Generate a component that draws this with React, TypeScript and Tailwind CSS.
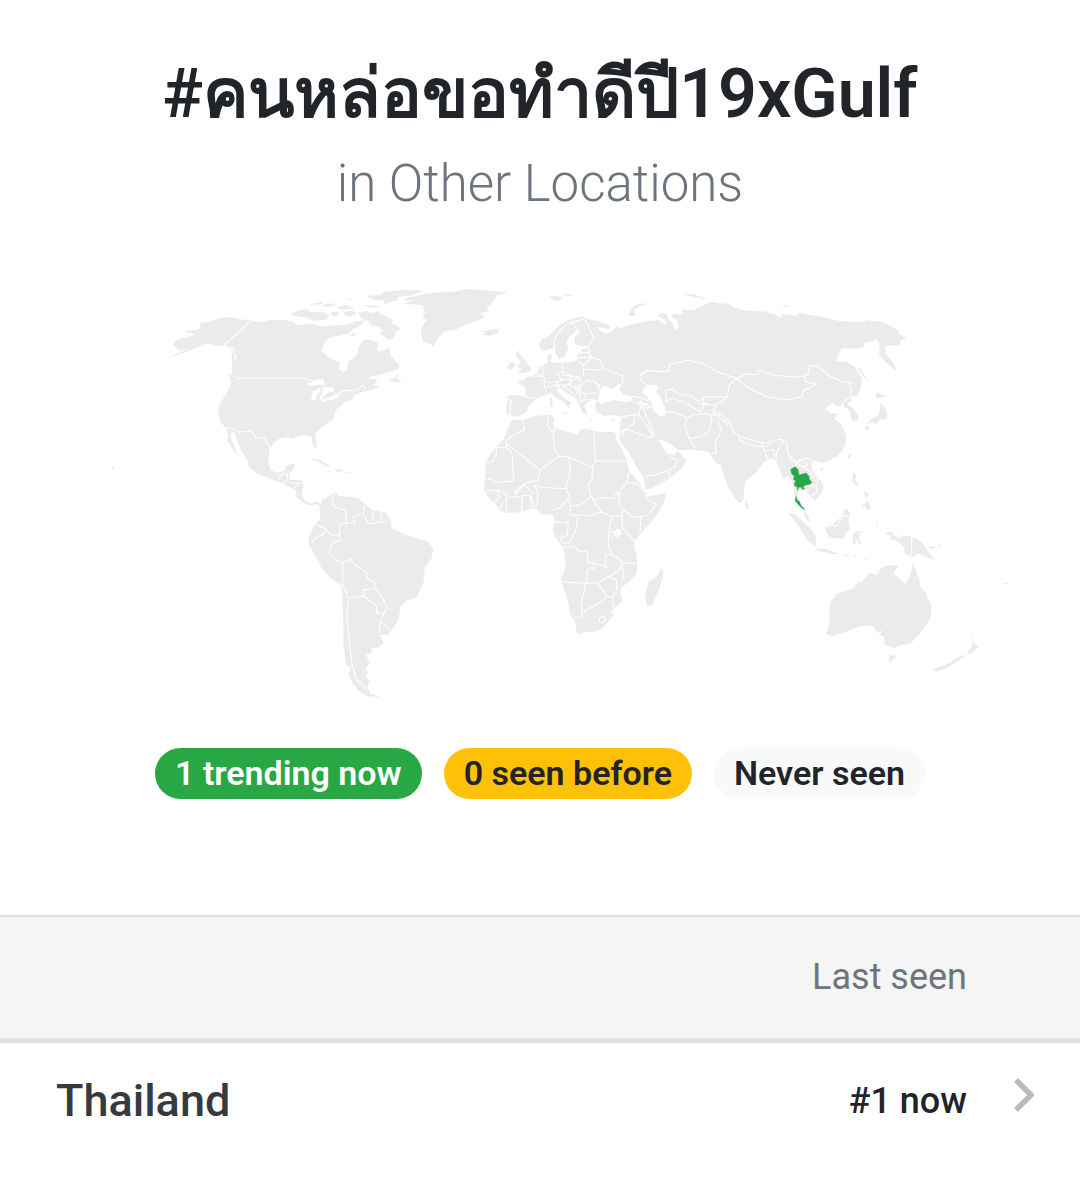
type Region = { origin: string; land: string; water?: string; borders: string };

// Each region is drawn on its own grid, three units to one map unit.
const regions: Region[] = [
  {
    // North America
    origin: "translate(150 270) scale(0.33333)",
    land:
      "M68 225L78 212L95 205L118 202L135 192L105 187L112 181L138 181L150 175L148 160L175 155L205 145L235 141L270 148L305 152L325 157L360 150L400 150L430 155L440 165L490 162L520 170L560 165L590 166L612 155L645 150L630 168L608 178L598 192L575 196L545 200L525 215L513 240L530 258L550 270L570 275L566 295L580 308L592 298L594 275L612 265L625 250L625 232L640 210L665 210L685 220L680 235L688 245L705 240L718 230L722 258L748 285L745 298L720 305L690 314L665 318L645 330L672 325L683 335L668 345L692 350L665 360L640 365L615 375L605 390L585 395L572 408L560 418L555 425L553 445L530 462L505 480L495 492L500 520L497 541L488 525L485 500L465 495L440 500L428 506L405 502L385 508L368 522L358 540L355 575L362 600L380 608L405 602L412 585L437 580L430 598L418 612L422 630L452 630L460 640L458 660L455 678L465 692L455 692L432 658L398 640L370 630L320 610L295 590L295 575L275 545L262 515L255 488L245 485L242 500L250 520L258 545L266 560L252 545L240 523L232 515L235 500L228 475L210 455L205 425L207 405L230 370L243 340L240 325L246 308L245 240L222 228L190 224L165 220L130 235L90 242Z" +
      "M420 135L445 120L480 117L475 125L520 127L538 135L528 150L490 152L468 142L450 140Z" +
      "M622 128L650 122L662 130L680 124L700 135L730 150L726 160L740 165L754 178L735 185L738 192L722 210L710 206L700 196L688 190L700 184L688 172L665 165L652 150L636 148Z" +
      "M650 78L690 75L700 66L760 60L810 60L790 70L745 82L740 92L700 102L705 92L665 88ZM760 100L810 88L810 101Z" +
      "M480 102L520 95L515 102L480 105ZM515 105L550 100L560 107L530 111ZM560 112L590 104L612 115L580 121ZM640 106L700 109L660 114ZM585 88L612 86L600 91ZM540 128L560 124L570 132L552 140ZM580 125L605 122L622 128L600 140L585 135Z" +
      "M718 332L738 320L745 308L742 322L755 338L735 336ZM40 269L100 244L165 222L110 246ZM231 310L248 322L240 324ZM596 195L612 190L622 194L605 198Z" +
      "M480 567L497 566L515 572L540 588L528 590L505 575ZM555 598L570 597L582 604L560 606ZM590 606L605 606L604 608L590 608ZM532 604L545 604L540 607Z",
    water:
      "M470 342L500 328L520 328L526 345L500 344L490 348ZM483 390L488 365L512 352L510 366L500 375L495 392ZM515 352L550 352L552 366L540 366L520 378L516 390L545 380L580 370L560 384L520 396L508 384L520 366Z",
    borders:
      "M305 152L222 225L238 234L250 232L252 250L260 262L252 270M250 316L262 325L460 325L490 333M545 380L580 362L620 361L638 345L648 358M228 475L245 474L268 487L305 482L318 505L345 502L352 520L362 538M385 628L395 614L412 612M412 612L414 628L398 640M416 634L425 640L458 640M430 655L445 645",
  },
  {
    // Greenland and Europe
    origin: "translate(400 270) scale(0.33333)",
    land:
      "M15 85L60 75L100 68L160 65L200 57L270 62L325 68L290 75L280 95L260 115L270 122L240 130L255 142L215 158L180 172L165 180L145 182L130 187L115 205L100 228L85 220L68 215L62 190L65 170L82 150L68 145L75 125L66 105L10 101L50 92L10 90ZM0 60L75 62L30 78L0 79Z" +
      "M320 378L340 375L378 380L376 355L352 334L375 328L378 320L395 320L410 308L420 290L438 280L445 278L440 260L454 250L456 262L452 275L470 280L485 278L520 275L533 268L530 255L545 250L542 238L568 235L560 228L530 226L522 215L525 200L540 185L535 178L525 185L508 200L500 215L505 238L492 262L478 268L466 250L462 232L445 240L425 242L418 225L422 210L450 195L480 165L510 148L545 140L570 148L600 155L632 168L628 178L590 170L605 185L620 192L640 180L652 168L660 175L690 165L720 158L760 152L780 150L780 510L760 505L700 478L675 490L660 487L665 440L640 435L610 438L588 425L585 405L592 395L582 388L560 398L552 408L562 434L548 428L535 400L528 385L510 375L490 362L478 352L470 362L490 382L515 400L508 402L508 418L495 400L465 380L455 368L440 372L430 378L412 385L388 405L380 425L365 435L345 440L320 432L318 410L325 390Z" +
      "M350 246L360 242L358 252L370 262L385 285L395 295L390 305L375 308L352 312L366 297L354 290L362 275L350 262ZM325 283L340 275L345 288L335 298L322 297ZM240 178L255 184L275 178L292 177L298 187L270 197L250 194L256 188ZM445 80L470 78L488 84L470 95ZM488 76L520 75L505 79Z" +
      "M685 134L695 112L715 103L755 99L720 108L702 120L705 138L692 138ZM450 384L456 384L458 410L450 412ZM485 428L503 427L498 434ZM565 446L585 447L575 450ZM632 450L648 444L640 454Z",
    water:
      "M598 372L600 358L612 348L625 352L635 358L645 350L655 345L666 346L656 358L670 372L692 380L698 392L680 397L640 390L605 402L592 394ZM732 360L742 348L768 344L775 354L766 365L780 378L790 405L800 430L785 440L770 430L762 410L748 388Z",
    borders:
      "M465 245L462 210L475 190L490 170L505 158L522 160L530 182M512 158L540 150L552 148L560 158M556 148L570 180L582 205L565 228M568 235L568 250L575 262L600 270L608 292L625 300L668 318L668 340L650 345M545 246L568 250M532 264L555 262L575 262M530 272L550 285L550 300L552 320M550 285L560 278L575 262M552 298L608 300M485 278L488 305L515 318L545 322M488 305L472 312L485 330L470 337L440 337M410 306L437 325L432 340L438 365M405 318L430 318L428 290M375 380L408 385M325 388L334 392L328 435M470 337L478 345L505 345L515 335M510 335L530 325L545 332L536 348L515 352ZM540 350L560 332L585 335L598 352L592 368L555 372L540 362ZM440 352L470 345L480 352M490 350L505 358L525 378M525 352L535 375M530 350L542 372L540 395M535 398L555 390L585 388M552 372L558 390M485 315L515 318L510 328L482 328M585 335L600 348M665 440L715 433L722 410L712 398M690 378L715 382L745 392M704 396L750 402M722 410L735 422M720 400L740 415L768 405M705 435L702 460L668 482M715 433L740 465L760 502M780 305L742 300L720 318L725 335L742 346",
  },
  {
    // Northern and central Asia
    origin: "translate(640 270) scale(0.33333)",
    land:
      "M0 160L30 152L55 155L82 165L75 150L55 138L60 128L78 130L85 145L100 165L105 180L118 170L110 150L92 138L98 133L130 132L125 120L160 120L185 108L215 95L235 100L270 102L278 112L320 122L380 125L425 142L425 132L470 138L475 128L545 140L580 150L620 155L675 155L675 150L725 155L760 172L780 185L775 192L800 205L780 212L780 224L735 228L738 252L765 285L768 302L740 280L718 255L718 220L708 207L700 214L672 218L674 230L655 236L605 235L588 272L620 275L645 290L665 325L663 355L650 378L632 378L634 392L622 402L640 415L655 435L655 450L640 455L632 440L625 418L612 412L610 400L598 410L582 405L580 398L560 412L555 418L575 430L595 430L582 445L605 465L620 500L612 535L590 560L550 578L520 572L512 590L530 615L548 640L548 660L470 660L465 635L445 615L430 628L422 600L405 572L395 565L372 575L350 605L315 635L312 670L310 690L300 700L288 690L265 650L250 615L243 585L228 580L205 545L165 540L115 540L95 525L60 508L35 490L0 470Z" +
      "M648 288L665 300L690 345L670 318ZM705 360L720 372L738 378L715 385L705 380L712 372ZM722 398L732 410L740 425L742 447L718 450L708 465L698 456L678 464L698 445L712 438L720 420ZM672 472L688 468L684 485ZM630 548L634 555L628 568L624 560ZM540 596L552 592L545 606Z" +
      "M130 72L155 72L205 86L160 81ZM415 104L455 108L440 110Z",
    water:
      "M8 356L22 346L48 344L55 354L46 365L60 378L62 392L75 410L76 436L58 438L40 425L38 405L25 385L10 368Z",
    borders:
      "M0 318L20 302L85 305L90 282L130 275L140 270L190 280L230 305L290 325L320 312L355 315L355 300L400 315L460 322L495 318L495 335L530 343L490 362L485 380L445 390L380 380L340 360L320 350L290 325M495 318L508 308L505 288L530 288L570 318L605 335L635 338L628 350L635 362L628 378M605 400L620 388L640 378M290 325L268 345L262 380L230 405L218 430L240 430L268 455L280 485L300 500L370 520L420 508L440 520L445 555L470 575L500 565L520 572M80 392L75 362L95 358L120 372L155 378L175 395L195 380L262 380M75 395L95 385L130 395L170 420L185 425M75 425L110 428L140 445L165 432L200 432L215 435L240 436M175 400L210 405L230 405M190 385L190 412L175 425M180 402L198 398M140 445L135 470L148 505L185 500L210 480L215 435M230 440L258 455L262 465M235 455L245 480L225 520L230 550L210 550M148 505L165 535M300 500L295 510L330 525L365 530L370 515M365 525L385 570M370 542L400 540L405 560M395 520L375 530M430 515L410 545L408 575M470 580L490 590L505 585M0 390L20 440L45 500M0 395L28 410",
  },
  {
    // Africa and Arabia
    origin: "translate(470 400) scale(0.33333)",
    land:
      "M128 60L160 60L200 48L245 43L254 60L248 72L255 84L275 90L300 98L322 106L330 90L350 85L372 93L400 97L430 95L440 103L437 118L455 145L470 182L478 215L495 232L515 258L528 275L530 288L560 286L588 277L585 300L570 330L548 360L515 398L495 420L493 440L500 465L502 492L500 518L478 545L455 562L452 580L458 605L435 622L430 645L400 682L380 694L345 697L325 704L318 692L318 672L300 640L293 600L275 550L275 530L288 500L285 470L280 445L270 430L252 408L248 385L255 362L248 345L235 343L215 343L200 328L185 327L150 336L110 340L90 330L72 310L52 288L42 268L45 240L48 215L45 190L60 165L75 145L95 125L105 108L112 85Z" +
      "M575 503L580 525L570 560L545 618L530 615L525 590L535 545L560 530Z" +
      "M455 50L520 38L555 105L578 140L590 160L612 165L622 152L650 180L635 205L600 235L545 265L528 270L522 235L500 200L475 155L452 125L448 100Z",
    water: "M432 396L440 386L452 388L454 402L444 412L434 408Z",
    borders:
      "M158 60L163 90L140 100L110 120L108 142L80 142L78 165L68 185L48 190M108 130L210 210L268 168L297 172M108 142L125 155L132 242L80 248L62 236L45 240M235 46L233 75L248 98L254 85M250 90L254 150L268 168M297 172L368 202L376 183L372 95M376 183L470 183M210 210L205 240L165 250L140 270L135 285M297 172L300 215L288 262M190 255L210 262L288 266L298 290M190 255L205 278L200 325M368 202L366 238L355 250L362 285L372 300M300 318L330 315L362 290L395 335M295 300L302 318L298 345L325 345M250 330L275 320L298 290M372 300L400 292L430 296L443 275L447 290L455 265L470 248L478 215M470 248L500 250L525 275M395 335L425 350L455 345L460 330L447 312L447 290M325 345L360 348L395 335M460 330L485 350L510 350L535 345L560 312L535 300L525 285M512 350L510 400M455 345L458 385L495 425M425 350L418 385L415 430L425 465L408 465L405 500M413 505L405 500L370 488L355 488L352 455L325 455L315 440L275 440M325 345L318 390L300 425L275 432M252 366L295 368L292 405L275 410L272 425M455 490L500 490M425 465L448 475L455 490L445 515L415 530L385 548L345 550L275 545M455 490L462 525L456 540M370 488L372 505L352 510L352 548M345 550L342 580L335 600L335 650L312 655M338 635L365 622L385 610L410 592L428 590M385 550L400 575L412 590M415 530L440 540L440 570L428 590L432 640L420 630M388 655L400 649L408 656L398 668L389 666ZM80 270L110 282L112 292L150 290M110 340L108 292M155 335L155 288L185 285M185 327L182 285L195 325M72 310L90 290L80 272L45 270M88 325L100 305M135 285L165 250M420 395L432 395M415 412L430 412M160 250L190 282M455 90L480 90L500 100L548 115M525 228L555 225L595 210L615 200L622 180L600 172M595 210L602 232M445 100L460 92L458 110",
  },
  {
    // South America
    origin: "translate(280 480) scale(0.33333)",
    land:
      "M45 45L68 35L62 48L76 64L95 70L108 62L122 72L125 60L150 45L168 38L175 48L205 50L235 55L255 72L275 90L320 98L332 125L335 145L380 165L410 175L445 185L460 205L455 235L435 262L430 310L412 350L378 362L362 380L355 420L335 450L325 465L300 465L310 490L298 502L275 505L276 518L258 525L268 545L262 560L256 570L266 577L255 590L268 600L262 622L270 640L300 652L262 648L235 632L215 605L205 585L212 562L200 560L190 500L190 430L185 315L150 295L125 265L105 225L85 192L88 165L105 135L120 118L118 78L108 72L95 76L80 74L52 54Z",
    borders:
      "M165 42L155 60L160 80L195 90L200 130L178 130L180 185M200 130L225 130L220 110L250 100L255 75M250 100L265 132L300 126L325 125M278 120L278 98M302 125L305 100M108 135L135 145L128 165L105 175L95 190M135 145L155 165L180 168M178 182L155 190L147 220L165 240L188 248L212 238L225 255L258 275L262 295L282 305L285 325L305 350L318 375L320 385L300 425L335 450M188 248L188 315L205 355L250 348L250 330L282 325M250 348L290 378L290 400L312 400L320 385M207 358L200 400L210 500L215 550L230 600L262 628M300 425L298 460",
  },
  {
    // South-east Asia and Oceania
    origin: "translate(740 420) scale(0.33333)",
    land:
      "M100 100L115 140L130 178L145 165L158 190L165 230L172 255L188 270L195 290L210 310L205 290L195 268L178 250L172 225L178 200L195 205L215 235L225 242L245 220L247 190L225 165L205 140L220 120L180 100Z" +
      "M145 278L160 280L190 305L215 330L228 352L228 378L205 365L180 325ZM228 385L260 388L300 402L275 402L235 392ZM305 404L330 404L320 408ZM372 418L392 404L380 417ZM340 406L355 408L345 411Z" +
      "M257 318L275 315L300 295L318 265L332 280L325 300L330 325L318 340L310 358L270 352L258 335ZM338 345L348 333L374 333L352 341L366 345L355 352L366 372L358 374L350 356L345 376L338 370Z" +
      "M338 155L350 165L345 180L360 200L350 198L337 185ZM363 258L375 250L385 242L393 262L382 272L375 258ZM370 215L388 222L378 234ZM408 313L413 313L412 322L408 320ZM328 215L318 235L322 225Z" +
      "M435 340L455 334L462 348L475 355L490 345L530 355L553 376L560 390L585 420L560 412L535 400L520 412L495 402L492 380L470 362L450 358L455 348ZM562 380L590 380L605 370L598 380L575 386Z" +
      "M272 545L290 522L340 505L354 485L362 488L390 458L412 465L422 445L445 434L475 438L460 460L495 492L508 475L520 428L530 460L538 475L540 500L558 520L575 560L572 595L545 635L510 672L475 677L465 685L435 675L432 650L418 645L430 630L412 640L400 618L360 618L320 635L275 648L258 642L268 615L268 570Z" +
      "M448 705L472 708L455 722L446 725ZM698 648L702 668L718 680L690 703L680 700L695 680ZM680 705L620 745L590 755L580 748L630 728L660 708ZM18 240L28 262L22 269L15 255ZM792 488L804 490L796 493ZM684 520L692 526L688 525ZM708 462L718 465L712 466Z",
    borders:
      "M258 318L290 318L302 300L308 287L328 286M515 350L515 408M146 100L155 122L172 130L165 140M170 128L180 118L205 135M178 135L205 150L222 175M195 200L230 195L235 175L215 150M185 270L200 278M228 195L232 215L215 228",
  },
];

const thailand =
  "M152 148L166 140L175 150L177 165L198 159L207 168L208 178L216 187L210 193L195 196L190 201L194 208L187 208L184 202L176 202L173 212L171 200L164 198L163 188L168 184L160 178L163 168L155 162ZM168 229L172 240L178 244L184 258L196 269L185 264L165 242Z";

const badges = [
  { label: "1 trending now", tone: "bg-[#28a745] text-white" },
  { label: "0 seen before", tone: "bg-[#ffc107] text-[#212529]" },
  { label: "Never seen", tone: "bg-[#f8f9fa] text-[#212529]" },
];

function WorldMap() {
  return (
    <svg viewBox="0 260 1080 460" className="block w-full" role="img" aria-label="World map">
      {regions.map((r) => (
        <path key={r.origin} transform={r.origin} d={r.land} fill="#ebebeb" />
      ))}
      {regions.map((r) => (
        <g key={r.origin} transform={r.origin}>
          {r.water && <path d={r.water} fill="#fff" />}
          <path d={r.borders} fill="none" stroke="#fff" strokeWidth="3.2" strokeLinejoin="round" />
        </g>
      ))}
      <path
        transform="translate(740 420) scale(0.33333)"
        d={thailand}
        fill="#28a745"
        stroke="#28a745"
        strokeWidth="1"
      />
      <path d="M112 467h2v2h-2zM1004 583h3v1h-3z" fill="#ebebeb" />
    </svg>
  );
}

export default function App() {
  return (
    <main className="min-h-screen bg-white font-[Roboto,sans-serif] text-[#212529]">
      <header className="px-6 pt-[54px] text-center">
        <h1 className="text-[68px] leading-20 font-semibold">#คนหล่อขอทำดีปี19xGulf</h1>
        <p className="mt-5 text-[51px] leading-15 font-light text-[#6c757d]">in Other Locations</p>
      </header>

      <section className="mt-[46px]">
        <WorldMap />
        <ul className="mt-7 flex flex-wrap justify-center gap-[22px]">
          {badges.map((b) => (
            <li
              key={b.label}
              className={`rounded-full px-5 pt-[5px] pb-1.5 text-[34px] leading-10 font-semibold ${b.tone}`}
            >
              {b.label}
            </li>
          ))}
        </ul>
      </section>

      <table className="mt-29 w-full border-collapse">
        <thead className="border-t-2 border-b-5 border-[#dee2e6] bg-[#f5f5f5]">
          <tr>
            <td />
            <th scope="col" className="pt-8 pb-[33px] text-right text-[36px] leading-14 font-normal text-[#6c757d]">
              Last seen
            </th>
            <td className="w-[113px]" />
          </tr>
        </thead>
        <tbody>
          <tr>
            <th scope="row" className="py-7 pl-14 text-left text-[45px] leading-15 font-medium text-[#343a40]">
              <a href="#thailand">Thailand</a>
            </th>
            <td className="text-right text-[36px] font-medium">#1 now</td>
            <td className="w-[113px] pb-3">
              <svg viewBox="0 0 20 34" className="ml-auto mr-[46px] block w-5" aria-hidden="true">
                <path d="M2 2l15 15L2 32" fill="none" stroke="#bababa" strokeWidth="5.5" />
              </svg>
            </td>
          </tr>
        </tbody>
      </table>
    </main>
  );
}
